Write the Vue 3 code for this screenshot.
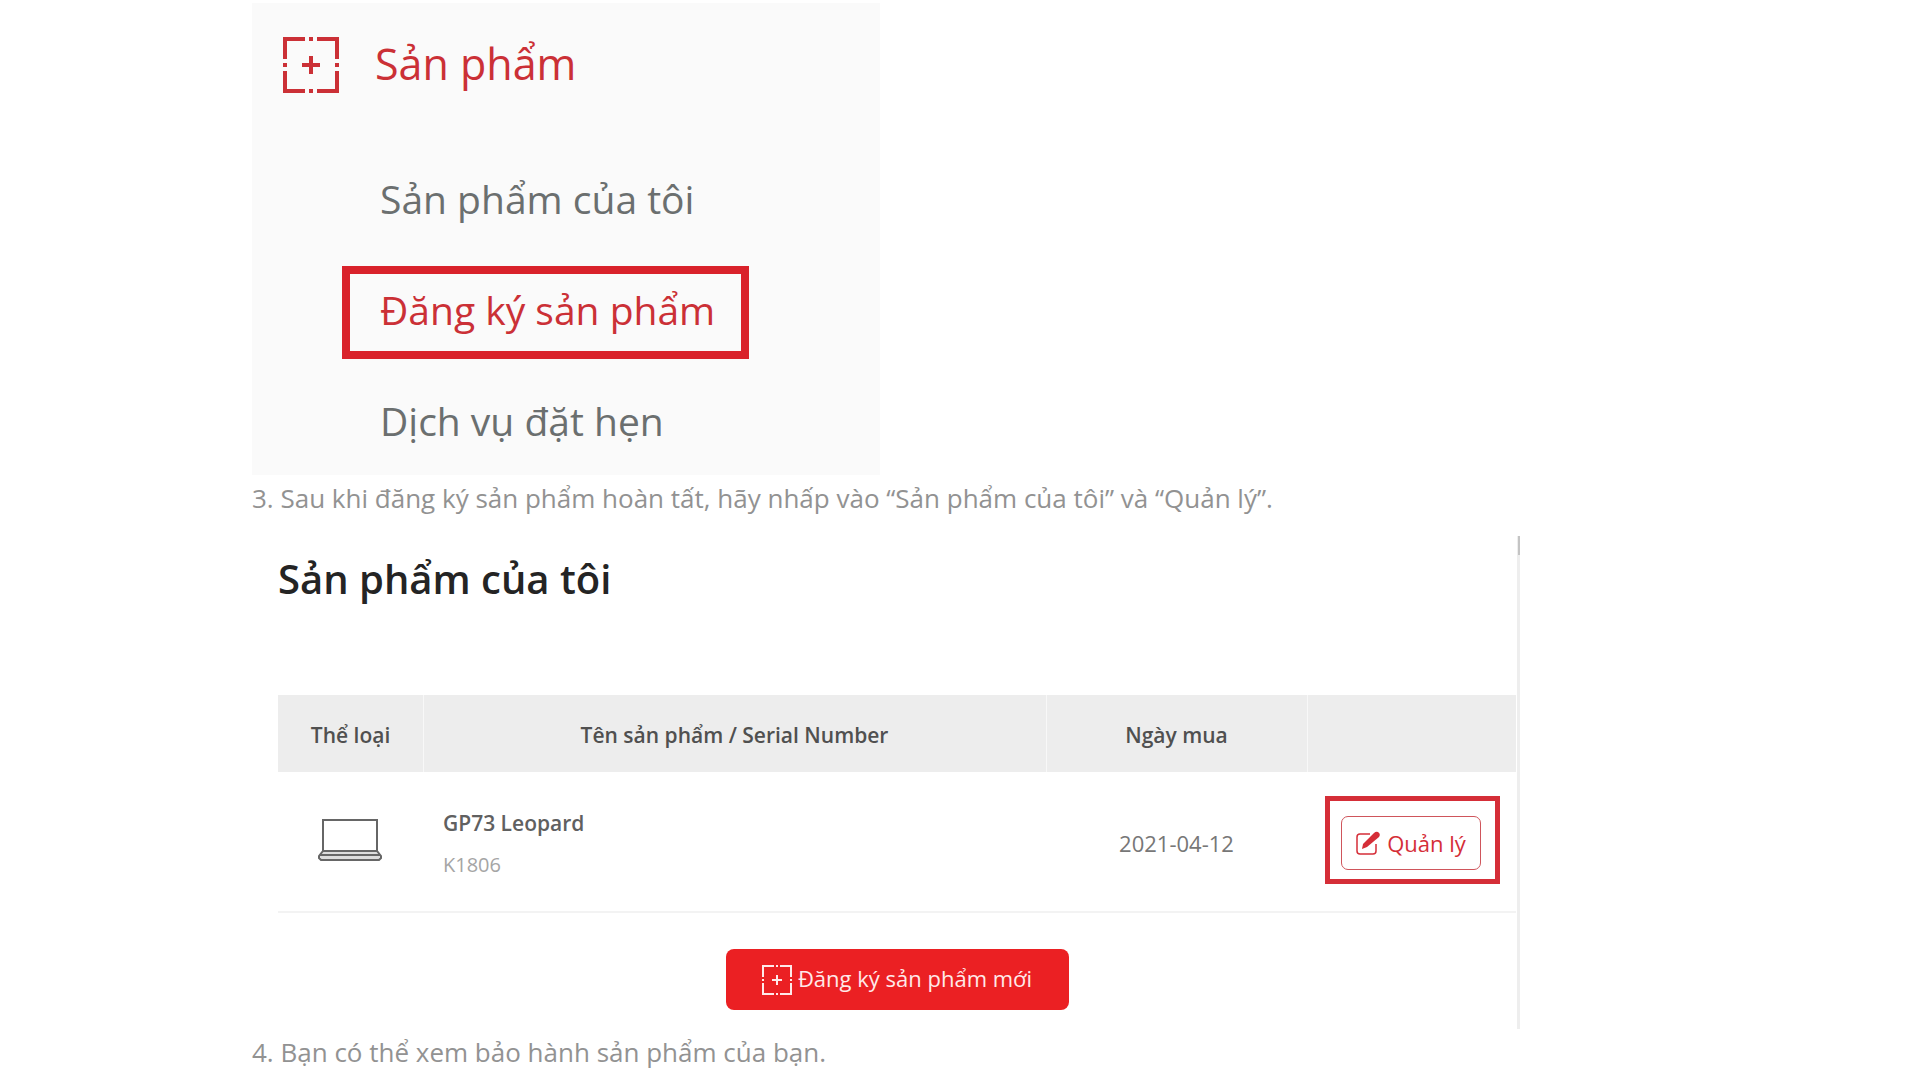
<script setup>
const menu = [
  { label: 'Sản phẩm của tôi', active: false },
  { label: 'Đăng ký sản phẩm', active: true },
  { label: 'Dịch vụ đặt hẹn', active: false },
]
const products = [{ name: 'GP73 Leopard', serial: 'K1806', date: '2021-04-12' }]
</script>

<template>
  <main class="guide">
    <nav class="menu">
      <a class="menu-head" href="#">
        <svg class="menu-icon" viewBox="0 0 56 56" fill="none" stroke="currentColor" stroke-width="4" aria-hidden="true">
          <path d="M22 2H2V22M34 2H54V22M2 34V54H22M54 34V54H34M26 2H30M26 54H30M2 26V30M54 26V30M28 19V37M19 28H37" />
        </svg>
        <span>Sản phẩm</span>
      </a>
      <ul class="menu-list">
        <li v-for="item in menu" :key="item.label">
          <a href="#" class="menu-item" :class="{ active: item.active }">{{ item.label }}</a>
        </li>
      </ul>
    </nav>

    <p class="step">3. Sau khi đăng ký sản phẩm hoàn tất, hãy nhấp vào “Sản phẩm của tôi” và “Quản lý”.</p>

    <section class="products">
      <h2>Sản phẩm của tôi</h2>
      <table>
        <colgroup>
          <col class="col-type" />
          <col />
          <col class="col-date" />
          <col class="col-action" />
        </colgroup>
        <thead>
          <tr>
            <th>Thể loại</th>
            <th>Tên sản phẩm / Serial Number</th>
            <th>Ngày mua</th>
            <th></th>
          </tr>
        </thead>
        <tbody>
          <tr v-for="p in products" :key="p.serial">
            <td class="type">
              <svg class="laptop" viewBox="0 0 64 42" fill="none" stroke="#666" stroke-width="2" aria-hidden="true">
                <path d="M5 32V1H59V32" />
                <path d="M5 32H59L63 37V39L61 41H3L1 39V37Z" fill="#dcdcdc" />
                <path d="M2 36H62" />
              </svg>
            </td>
            <td class="product">
              <strong>{{ p.name }}</strong>
              <small>{{ p.serial }}</small>
            </td>
            <td class="date">{{ p.date }}</td>
            <td class="action">
              <div class="highlight">
                <button type="button" class="manage">
                  <svg viewBox="0 0 24 24" fill="none" aria-hidden="true">
                    <path d="M14 3H4Q1 3 1 6V20Q1 23 4 23H17Q20 23 20 20V13" stroke="currentColor" stroke-width="1.5" />
                    <path d="M6 18L7 13L18 2Q20 0 22 1Q25 3 23 6L11 16Z" fill="currentColor" />
                  </svg>
                  <span>Quản lý</span>
                </button>
              </div>
            </td>
          </tr>
        </tbody>
      </table>
      <button type="button" class="register">
        <svg viewBox="0 0 30 30" fill="none" stroke="currentColor" stroke-width="2" aria-hidden="true">
          <path d="M12 1H1V12M18 1H29V12M1 18V29H12M29 18V29H18M14 1H16M14 29H16M1 14V16M29 14V16M15 10V20M10 15H20" />
        </svg>
        <span>Đăng ký sản phẩm mới</span>
      </button>
    </section>

    <p class="step">4. Bạn có thể xem bảo hành sản phẩm của bạn.</p>
  </main>
</template>

<style>
body {
  margin: 0;
  background: #fff;
}
</style>

<style scoped>
.guide {
  box-sizing: border-box;
  max-width: 1416px;
  margin: 0 auto;
  padding-top: 3px;
  font-family: "Open Sans", "Noto Sans", sans-serif;
}
a {
  text-decoration: none;
}
button {
  font-family: inherit;
  cursor: pointer;
}
.menu {
  box-sizing: border-box;
  max-width: 628px;
  padding: 34px 0 5px;
  background: #fafafa;
}
.menu-head {
  display: flex;
  gap: 36px;
  padding-left: 31px;
  font-size: 43px;
  line-height: 54px;
  color: #cb3036;
}
.menu-icon {
  width: 56px;
  height: 56px;
}
.menu-list {
  display: flex;
  flex-direction: column;
  align-items: flex-start;
  gap: 18px;
  margin: 62px 0 0;
  padding: 0 0 0 90px;
  list-style: none;
}
.menu-item {
  display: block;
  padding: 8px 26px 13px 30px;
  border: 8px solid transparent;
  font-size: 39px;
  line-height: 56px;
  color: #6b6f6f;
}
.menu-item.active {
  border-color: #d9222b;
  color: #cb3036;
}
.step {
  margin: 0;
  padding-top: 1px;
  font-size: 26px;
  line-height: 44px;
  color: #929292;
}
.products {
  position: relative;
  box-sizing: border-box;
  max-width: 1268px;
  margin-top: 16px;
  padding: 13px 1px 19px 26px;
  border-right: 3px solid #eee;
}
.products::after {
  content: "";
  position: absolute;
  top: 0;
  right: -3px;
  width: 2px;
  height: 19px;
  background: #c4c4c4;
}
h2 {
  margin: 0 0 86px;
  font-size: 40px;
  font-weight: 600;
  line-height: 60px;
  color: #242424;
}
table {
  width: 100%;
  table-layout: fixed;
  border-collapse: separate;
  border-spacing: 0;
  font-size: 22px;
  line-height: 30px;
  text-align: center;
}
.col-type {
  width: 145px;
}
.col-date {
  width: 261px;
}
.col-action {
  width: 209px;
}
th {
  height: 74px;
  padding: 3px 0 0;
  background: #ededed;
  font-size: 21px;
  font-weight: 600;
  color: #505050;
}
th + th {
  box-shadow: inset 1px 0 #f8f8f8;
}
td {
  height: 135px;
  padding: 2px 0 0;
  border-bottom: 2px solid #f3f3f3;
}
td.type {
  padding: 0 2px 4px 0;
}
td.action {
  padding: 0 0 4px 2px;
}
.laptop {
  display: block;
  width: 64px;
  height: 42px;
  margin: 0 auto;
}
td.product {
  padding: 4px 0 0 20px;
  text-align: left;
}
.product strong,
.product small {
  display: block;
}
.product strong {
  font-size: 21px;
  font-weight: 600;
  color: #606060;
}
.product small {
  margin-top: 12px;
  font-size: 20px;
  color: #a5a5a5;
}
.date {
  color: #777;
}
.highlight {
  width: fit-content;
  margin: 0 auto;
  padding: 15px 14px 9px 11px;
  border: 5px solid #d52e38;
}
.manage {
  display: flex;
  align-items: center;
  gap: 7px;
  height: 54px;
  padding: 0 14px;
  border: 1px solid #cf555b;
  border-radius: 7px;
  background: #fff;
  font-size: 22px;
  color: #d52e38;
}
.manage svg {
  width: 24px;
  height: 24px;
}
.register {
  display: flex;
  align-items: center;
  justify-content: center;
  gap: 6px;
  width: 343px;
  height: 61px;
  margin: 36px auto 0;
  padding: 0;
  border: 0;
  border-radius: 8px;
  background: #eb2023;
  font-size: 22px;
  color: #ffe9e9;
}
.register svg {
  width: 30px;
  height: 30px;
}
.register span {
  padding-bottom: 4px;
}
</style>
